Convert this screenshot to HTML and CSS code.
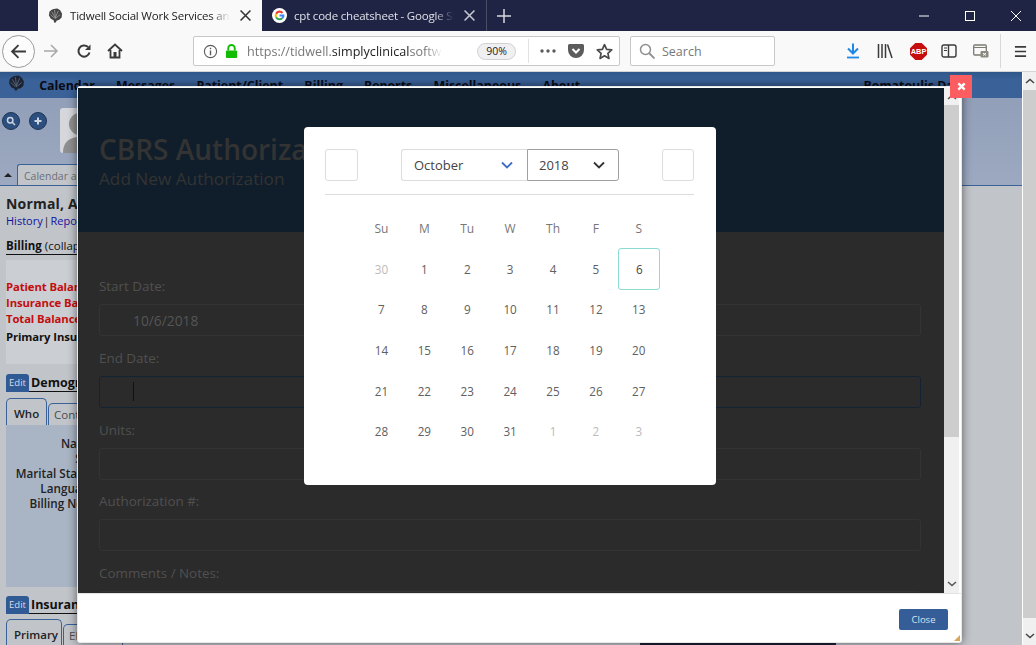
FILE: index.html
```html
<!DOCTYPE html>
<html lang="en">
<head>
<meta charset="utf-8">
<title>Tidwell Social Work Services</title>
<link rel="stylesheet" href="styles.css">
</head>
<body>
<div class="tabbar">
  <div class="tab active">
    <svg class="fav" viewBox="0 0 16 16"><path d="M6 1 10 0.500 13 2.500 15 6 14.500 10 12 12.500 9 13.500 8.500 15.500 6.500 15.500 6 13 3 11.500 1 8 1.500 4 3.500 2Z" fill="#444"/><path d="M4 4 8 11M7 2 8 11M11 3 8 10M13 7 8 11M2.500 7 7 11" stroke="#a5a5a5" stroke-width=".8" fill="none"/></svg>
    <span class="tab-title">Tidwell Social Work Services and</span>
    <svg class="tab-x" viewBox="0 0 10 10"><path d="M0.5 0.5 9.5 9.5M9.5 0.5 0.5 9.5" stroke="#333" stroke-width="1.4"/></svg>
  </div>
  <div class="tab">
    <svg class="fav" viewBox="0 0 16 16"><circle cx="8" cy="8" r="8" fill="#fff"/><path d="M3.5 5.5A5.2 5.2 0 0 1 12 4.5L10.5 6A3.1 3.1 0 0 0 5.400 6.800Z" fill="#ea4335"/><path d="M3.500 5.500A5.200 5.200 0 0 0 3.500 10.500L5.300 9.200A3.100 3.100 0 0 1 5.400 6.800Z" fill="#fbbc05"/><path d="M3.500 10.500A5.200 5.200 0 0 0 11.800 11.500L10.200 10.200A3.100 3.100 0 0 1 5.300 9.200Z" fill="#34a853"/><path d="M13.200 7H8V9H11A2.700 2.700 0 0 1 10.200 10.200L11.800 11.500A5.200 5.200 0 0 0 13.200 7Z" fill="#4285f4"/></svg>
    <span class="tab-title">cpt code cheatsheet - Google Sh</span>
    <svg class="tab-x" viewBox="0 0 10 10"><path d="M0.5 0.5 9.5 9.5M9.5 0.5 0.5 9.5" stroke="#c8c9d2" stroke-width="1.4"/></svg>
  </div>
  <div class="tab-plus"><svg viewBox="0 0 14 14"><path d="M7 0V14M0 7H14" stroke="#d8d9e0" stroke-width="1.500"/></svg></div>
  <div class="win-controls">
    <svg viewBox="0 0 12 12"><path d="M1 6H11" stroke="#fff"/></svg>
    <svg viewBox="0 0 12 12"><rect x="1.500" y="1.500" width="9" height="9" fill="none" stroke="#fff"/></svg>
    <svg viewBox="0 0 12 12"><path d="M1 1 11 11M11 1 1 11" stroke="#fff"/></svg>
  </div>
</div>

<div class="toolbar">
  <div class="back"><svg viewBox="0 0 16 16"><path d="M15 8H2M8 2 2 8 8 14" fill="none" stroke="#3b3b3b" stroke-width="1.800"/></svg></div>
  <svg class="tool forward" viewBox="0 0 16 16"><path d="M1 8H14M8 2 14 8 8 14" fill="none" stroke="#a8a8a8" stroke-width="1.500"/></svg>
  <svg class="tool reload" viewBox="0 0 16 16"><path d="M13.500 9.500A5.600 5.600 0 1 1 12 4" fill="none" stroke="#3b3b3b" stroke-width="2"/><path d="M14.500 1.500V7H9Z" fill="#3b3b3b"/></svg>
  <svg class="tool home" viewBox="0 0 16 16"><path d="M1 8 8 1.500 15 8M3.500 7V14.500H12.500V7" fill="none" stroke="#3b3b3b" stroke-width="1.800"/><rect x="6.500" y="9" width="3" height="5.500" fill="#3b3b3b"/></svg>

  <div class="urlbar">
    <svg class="u-info" viewBox="0 0 16 16"><circle cx="8" cy="8" r="6.500" fill="none" stroke="#5c5c5c" stroke-width="1.200"/><path d="M8 7V12M8 4V5.500" stroke="#5c5c5c" stroke-width="1.500"/></svg>
    <svg class="u-lock" viewBox="0 0 14 16"><path d="M3.500 7V4.500A3.500 3.500 0 0 1 10.500 4.500V7" fill="none" stroke="#12bc00" stroke-width="2"/><rect x="1" y="7" width="12" height="8" rx="1" fill="#12bc00"/></svg>
    <span class="u-text">https://tidwell.<b>simplyclinical</b>softw</span>
    <span class="zoom-pill">90%</span>
    <span class="u-sep"></span>
    <svg class="u-dots" viewBox="0 0 16 4"><circle cx="2" cy="2" r="1.700"/><circle cx="8" cy="2" r="1.700"/><circle cx="14" cy="2" r="1.700"/></svg>
    <svg class="u-pocket" viewBox="0 0 16 16"><path d="M0 2.500A1.500 1.500 0 0 1 1.500 1H14.500A1.500 1.500 0 0 1 16 2.500V7A8 8 0 0 1 0 7Z" fill="#5c5c5c"/><path d="M4.500 6 8 9.500 11.500 6" fill="none" stroke="#fff" stroke-width="2"/></svg>
    <svg class="u-star" viewBox="0 0 16 16"><path d="M8 1.500 10 6 14.800 6.500 11.200 9.700 12.200 14.500 8 12 3.800 14.500 4.800 9.700 1.200 6.500 6 6Z" fill="none" stroke="#4a4a4a" stroke-width="1.600" stroke-linejoin="round"/></svg>
  </div>

  <div class="searchbar">
    <svg viewBox="0 0 16 16"><circle cx="6.500" cy="6.500" r="5" fill="none" stroke="#8f8f8f" stroke-width="1.500"/><path d="M10 10 15.500 15.500" stroke="#8f8f8f" stroke-width="1.800"/></svg>
    <span>Search</span>
  </div>

  <div class="tool-right">
    <svg class="download" viewBox="0 0 14 16"><path d="M7 0.500V10M2 5.500 7 10.500 12 5.500" fill="none" stroke="#1e88e5" stroke-width="2"/><path d="M1 14.500H13" stroke="#1e88e5" stroke-width="1.800"/></svg>
    <svg class="library" viewBox="0 0 16 16"><path d="M1.500 1V15M5 1V15M8.500 1V15M10.500 1.500 15 15" fill="none" stroke="#3b3b3b" stroke-width="1.500"/></svg>
    <svg class="abp" viewBox="0 0 16 16"><path d="M5 0H11L16 5V11L11 16H5L0 11V5Z" fill="#c70d0d"/><text x="8" y="10.700" text-anchor="middle" class="abp-text">ABP</text></svg>
    <svg class="sidebar-ic" viewBox="0 0 16 16"><rect x="1" y="2" width="14" height="12" rx="2" fill="none" stroke="#3b3b3b" stroke-width="1.400"/><path d="M7.500 2V14" stroke="#3b3b3b" stroke-width="1.400"/><path d="M3 5H6M3 7.500H6" stroke="#3b3b3b"/></svg>
    <svg class="pip" viewBox="0 0 16 16"><rect x="0.700" y="2" width="12.600" height="10" rx="1" fill="none" stroke="#7b7b72" stroke-width="1.300"/><path d="M1 4.500H13" stroke="#7b7b72"/><rect x="7.500" y="8" width="8" height="6.500" rx="1" fill="#8a8a80"/><path d="M10 10 13 12.500M13 10 10 12.500" stroke="#fff"/></svg>
    <span class="t-sep"></span>
    <svg class="menu" viewBox="0 0 14 14"><path d="M1 2H13M1 7H13M1 12H13" stroke="#3b3b3b" stroke-width="1.800"/></svg>
  </div>
</div>

<div class="page">
  <div class="app">
    <nav class="appnav">
      <svg class="applogo" viewBox="0 0 16 16"><path d="M6 1 10 0.500 13 2.500 15 6 14.500 10 12 12.500 9 13 8.500 14.500 6.500 14.500 6 13 3 11.500 1 8 1.500 4 3.500 2Z" fill="#1c2433"/><path d="M4 4 8 11M7 2 8 11M11 3 8 10M13 7 8 11M2.500 7 7 11" stroke="#58677f" stroke-width=".8" fill="none"/></svg>
      <a>Calendar</a><a>Messages</a><a>Patient/Client</a><a>Billing</a><a>Reports</a><a>Miscellaneous</a><a>About</a>
      <a class="nav-user">Bomatoulis Dan</a>
    </nav>
    <aside class="side">
      <div class="side-top">
        <div class="side-tools">
          <span class="round"><svg viewBox="0 0 10 10"><circle cx="4.200" cy="4.200" r="2.700" fill="none" stroke="#cdd5e2" stroke-width="1.500"/><path d="M6 6 9 9" stroke="#cdd5e2" stroke-width="1.500"/></svg></span>
          <span class="round"><svg viewBox="0 0 10 10"><path d="M5 1.500V8.500M1.500 5H8.500" stroke="#cdd5e2" stroke-width="2"/></svg></span>
          <div class="avatar"><svg viewBox="0 0 40 45"><circle cx="20" cy="16" r="11" fill="#8f8f8f"/><path d="M3 45C3 32 12 29 20 29S37 32 37 45Z" fill="#8f8f8f"/></svg></div>
        </div>
        <div class="side-tabs">
          <span class="up-tri"></span>
          <span class="side-tab">Calendar and</span>
        </div>
      </div>
      <div class="side-body">
        <div class="patient">Normal, Adam</div>
        <div class="plinks"><a>History</a> | <a>Reports</a></div>
        <div class="sec-title"><b>Billing</b> (collapse)</div>
        <div class="bill-box">
          <div class="red">Patient Balance:</div>
          <div class="red">Insurance Balance:</div>
          <div class="red">Total Balance:</div>
          <div class="ins">Primary Insurance:</div>
        </div>
        <div class="sec-head"><span class="edit">Edit</span><b>Demographics</b></div>
        <div class="mini-tabs"><span class="mini on">Who</span><span class="mini">Contact</span></div>
        <div class="who-panel">
          <div>Name:</div><div>Sex:</div><div>Marital Status:</div><div>Language:</div><div>Billing Note:</div>
        </div>
        <div class="sec-head ins-head"><span class="edit">Edit</span><b>Insurance</b></div>
        <div class="mini-tabs ins-tabs"><span class="mini on wide">Primary</span><span class="mini">Eligibility</span></div>
      </div>
    </aside>
  </div>
  <div class="page-scroll">
    <svg viewBox="0 0 10 6"><path d="M1 5 5 1.500 9 5" fill="none" stroke="#444" stroke-width="1.500"/></svg>
    <span class="page-thumb"></span>
    <svg viewBox="0 0 10 6"><path d="M1 1 5 4.500 9 1" fill="none" stroke="#444" stroke-width="1.500"/></svg>
  </div>

  <span class="page-strip"></span>

  <div class="modal">
    <div class="modal-main">
      <div class="modal-content">
        <header class="m-head">
          <h1>CBRS Authorization</h1>
          <p>Add New Authorization</p>
        </header>
        <div class="m-body">
          <div class="field"><label>Start Date:</label><div class="input">10/6/2018</div></div>
          <div class="field"><label>End Date:</label><div class="input focus"><span class="caret"></span></div></div>
          <div class="field"><label>Units:</label><div class="input"></div></div>
          <div class="field"><label>Authorization #:</label><div class="input"></div></div>
          <div class="field"><label>Comments / Notes:</label><div class="input"></div></div>
        </div>
      </div>
      <div class="m-scroll">
        <svg viewBox="0 0 10 6"><path d="M1 5 5 1.500 9 5" fill="none" stroke="#555" stroke-width="1.500"/></svg>
        <span class="m-thumb"></span>
        <svg viewBox="0 0 10 6"><path d="M1 1 5 4.500 9 1" fill="none" stroke="#555" stroke-width="1.500"/></svg>
      </div>
    </div>
    <footer class="m-foot"><button class="close-btn">Close</button></footer>
    <span class="grip"></span>
  </div>
  <button class="modal-x"><svg viewBox="0 0 10 10"><path d="M1.500 1.500 8.500 8.500M8.500 1.500 1.500 8.500" stroke="#fff" stroke-width="2.600"/></svg></button>

  <div class="cal">
    <div class="cal-head">
      <span class="cal-nav"></span>
      <div class="cal-selects">
        <div class="sel month">October<svg viewBox="0 0 12 8"><path d="M1 1.500 6 6.500 11 1.500" fill="none" stroke="#3a6fc4" stroke-width="1.800"/></svg></div>
        <div class="sel year">2018<svg viewBox="0 0 12 8"><path d="M1 1.500 6 6.500 11 1.500" fill="none" stroke="#333" stroke-width="1.800"/></svg></div>
      </div>
      <span class="cal-nav"></span>
    </div>
    <div class="cal-grid">
      <span class="dow">Su</span><span class="dow">M</span><span class="dow">Tu</span><span class="dow">W</span><span class="dow">Th</span><span class="dow">F</span><span class="dow">S</span>
      <span class="out">30</span><span>1</span><span>2</span><span>3</span><span>4</span><span>5</span><span class="today">6</span>
      <span>7</span><span>8</span><span>9</span><span>10</span><span>11</span><span>12</span><span>13</span>
      <span>14</span><span>15</span><span>16</span><span>17</span><span>18</span><span>19</span><span>20</span>
      <span>21</span><span>22</span><span>23</span><span>24</span><span>25</span><span>26</span><span>27</span>
      <span>28</span><span>29</span><span>30</span><span>31</span><span class="out">1</span><span class="out">2</span><span class="out">3</span>
    </div>
  </div>
</div>
</body>
</html>
```
FILE: styles.css
```css
* { box-sizing: border-box; }
html, body { margin: 0; height: 100%; overflow: hidden; }
body { width: 1036px; height: 645px; font-family: "Open Sans", "Noto Sans", sans-serif; background: #c1c5ca; }

.tabbar { height: 31px; background: #1f2344; display: flex; align-items: stretch; padding-left: 38px; }
.tab { width: 224px; display: flex; align-items: center; padding: 0 11px 0 10px; color: #dfe0e8; font-size: 11.500px; letter-spacing: -.2px; position: relative; }
.tab.active { background: #f9f9fa; color: #222; }
.fav { width: 15px; height: 15px; flex: none; margin-right: 7px; }
.tab-title { flex: 1; overflow: hidden; white-space: nowrap; -webkit-mask-image: linear-gradient(to right, #000 88%, transparent 100%); mask-image: linear-gradient(to right, #000 88%, transparent 100%); }
.tab-x { width: 11px; height: 11px; flex: none; margin-left: 10px; }
.tab-plus { width: 35px; border-left: 1px solid #4a4d68; margin: 0; display: flex; align-items: center; justify-content: center; height: 31px; }
.tab-plus svg { width: 14px; height: 14px; }
.win-controls { margin-left: auto; display: flex; align-items: center; gap: 34px; padding-right: 14px; }
.win-controls svg { width: 12px; height: 12px; }

.toolbar { height: 41px; background: #f9f9fa; display: flex; align-items: center; border-bottom: 1px solid #d4d4d6; padding-left: 2px; }
.back { width: 33px; height: 33px; border: 1px solid #9a9a9a; border-radius: 50%; background: #fcfcfc; display: flex; align-items: center; justify-content: center; flex: none; }
.back svg { width: 17px; height: 17px; }
.tool { width: 16px; height: 16px; flex: none; }
.forward { margin-left: 8px; }
.reload { margin-left: 17px; }
.home { margin-left: 15px; }

.urlbar { width: 427px; height: 30px; margin-left: 70px; background: #fff; border: 1px solid #c8c8ca; border-radius: 2px; display: flex; align-items: center; padding-left: 9px; flex: none; }
.u-info { width: 15px; height: 15px; flex: none; }
.u-lock { width: 13px; height: 15px; margin-left: 7px; flex: none; }
.u-text { margin-left: 9px; padding-top: 1px; width: 212px; font-size: 12.600px; color: #777; overflow: hidden; white-space: nowrap; flex: none; -webkit-mask-image: linear-gradient(to right, #000 84%, transparent 92%); mask-image: linear-gradient(to right, #000 84%, transparent 92%); }
.u-text b { font-weight: 400; color: #222; }
.zoom-pill { margin-left: 18px; width: 39px; height: 17px; border: 1px solid #d0d0d0; border-radius: 9px; background: #f0f0f2; font-size: 10.500px; color: #222; display: flex; align-items: center; justify-content: center; flex: none; }
.u-sep { width: 1px; height: 24px; background: #e2e2e4; margin-left: 12px; flex: none; }
.u-dots { width: 16px; height: 4px; margin-left: 11px; fill: #5c5c5c; flex: none; }
.u-pocket { width: 16px; height: 16px; margin-left: 12px; flex: none; }
.u-star { width: 17px; height: 17px; margin-left: 12px; flex: none; }

.searchbar { width: 145px; height: 30px; margin-left: 10px; background: #fff; border: 1px solid #c8c8ca; border-radius: 2px; display: flex; align-items: center; padding-left: 8px; color: #777; font-size: 12.500px; flex: none; }
.searchbar svg { width: 16px; height: 16px; margin-right: 7px; }
.searchbar span { padding-top: 1px; }

.tool-right { display: flex; align-items: center; flex: 1; height: 100%; position: relative; }
.download { width: 14px; height: 16px; margin-left: 71px; }
.library { width: 16px; height: 16px; margin-left: 17px; }
.abp { width: 17px; height: 17px; margin-left: 17px; }
.abp-text { font: 700 7px "Liberation Sans", sans-serif; fill: #fff; }
.sidebar-ic { width: 16px; height: 16px; margin-left: 14px; }
.pip { width: 16px; height: 16px; margin-left: 16px; }
.t-sep { width: 1px; height: 34px; background: #d8d8da; margin-left: 11px; }
.menu { width: 13px; height: 13px; margin-left: 13px; }

.page { height: 573px; display: flex; position: relative; overflow: hidden; }
.app { flex: 1; display: flex; flex-direction: column; min-width: 0; }
.appnav { height: 26px; flex: none; display: flex; align-items: center; background: linear-gradient(#2f5788, #3a6299 30%); padding-left: 8px; gap: 21.200px; font: 700 12.400px "Open Sans", sans-serif; color: #0a0a14; white-space: nowrap; }
.applogo { width: 17px; height: 17px; margin-right: -7px; margin-top: -3px; }
.nav-user { margin-left: auto; margin-right: 60px; }

.side { flex: 1; display: flex; flex-direction: column; width: 100%; }
.side-top { height: 88px; flex: none; background: linear-gradient(#929fb8, #9ca9c1); border-bottom: 1px solid #3a6299; display: flex; flex-direction: column; justify-content: space-between; }
.side-tools { display: flex; align-items: flex-start; padding: 10px 0 0 2px; gap: 9px; height: 60px; }
.round { width: 18px; height: 18px; border-radius: 50%; background: #2c4f80; border: 1px solid #1d3556; display: flex; align-items: center; justify-content: center; margin-top: 4px; }
.round svg { width: 10px; height: 10px; }
.avatar { width: 46px; height: 45px; background: #d5d7db; border-radius: 3px; margin-left: 4px; overflow: hidden; }
.avatar svg { width: 40px; height: 45px; display: block; }
.side-tabs { display: flex; align-items: flex-end; height: 21px; }
.up-tri { width: 0; height: 0; border: 4px solid transparent; border-top: 0; border-bottom: 4px solid #222; margin: 0 5px 8px 4px; }
.side-tab { height: 21px; width: 110px; background: #c1c5ca; border-top: 1px solid #3a6299; border-left: 1px solid #3a6299; border-radius: 3px 0 0 0; font-size: 10.500px; color: #6b6f75; padding: 4px 0 0 6px; white-space: nowrap; }

.side-body { padding: 9px 0 0 6px; width: 200px; flex: 1; white-space: nowrap; font-size: 11.500px; color: #111; }
.patient { font-weight: 700; font-size: 14px; line-height: 18px; letter-spacing: .2px; color: #222; }
.plinks { line-height: 16px; color: #222; font-size: 11px; word-spacing: -2px; }
.plinks a { color: #12129c; }
.sec-title { margin-top: 8px; line-height: 17px; border-bottom: 1px solid #111; height: 18px; font-size: 11.500px; }
.bill-box { margin-top: 5px; height: 104px; background: #cbced3; padding-top: 19px; font-weight: 700; font-size: 11.300px; letter-spacing: -.1px; line-height: 16px; }
.red { color: #c40d0d; }
.ins { margin-top: 2px; color: #111; }
.sec-head { margin-top: 10px; height: 18px; border-bottom: 1px solid #111; display: flex; align-items: center; gap: 2px; font-size: 12.500px; }
.ins-head { margin-top: 9px; }
.edit { width: 23px; height: 18px; background: #2f5a94; color: #d5dde9; border-radius: 3px 3px 0 0; font-size: 9.500px; display: flex; align-items: center; justify-content: center; }
.mini-tabs { display: flex; align-items: flex-end; height: 27px; margin-top: 6px; gap: 1px; }
.ins-tabs { margin-top: 5px; }
.mini { width: 60px; height: 22px; border: 1px solid #3a6299; border-bottom: 0; border-radius: 5px 5px 0 0; font-size: 11.500px; padding: 3px 0 0 5px; color: #4a4d52; }
.mini.on { width: 41px; height: 27px; padding: 7px 0 0 7px; font-weight: 600; color: #222; background: #c1c5ca; }
.mini.on.wide { width: 56px; }
.who-panel { width: 92px; height: 162px; background: #a9b4c4; padding-top: 11px; text-align: right; font-weight: 600; font-size: 11.700px; line-height: 15px; color: #222; }

.page-scroll { width: 14px; flex: none; border-left: 1px solid #fff; background: #f0f0f0; display: flex; flex-direction: column; align-items: center; }
.page-scroll svg { width: 10px; height: 6px; flex: none; margin: 6px 0; }
.page-thumb { width: 100%; flex: 1; background: #cdcdcd; margin-bottom: 9px; }
.page-strip { position: absolute; left: 640px; bottom: 0; width: 196px; height: 2px; background: #1a2236; }

.modal { position: absolute; left: 77px; top: 14px; width: 885px; height: 557px; background: #fff; border: 1px solid #e8e8e8; border-radius: 3px; box-shadow: 0 0 10px rgba(0,0,0,.55); display: flex; flex-direction: column; }
.modal-main { height: 507px; display: flex; flex: none; padding-top: 1px; border-bottom: 1px solid #e3e3e3; }
.modal-content { flex: 1; background: #2b2b2b; overflow: hidden; min-width: 0; }
.m-head { height: 144px; background: #101e2b; padding: 43px 0 0 21px; color: #333; }
.m-head h1 { margin: 0; font-size: 28px; line-height: 36px; font-weight: 600; white-space: nowrap; }
.m-head p { margin: 0; font-size: 17.200px; line-height: 23px; }
.m-body { padding: 44px 23px 0 21px; display: flex; flex-direction: column; gap: 11.750px; }
.field { display: flex; flex-direction: column; gap: 8px; }
.field label { font-size: 13.400px; line-height: 20px; color: #505050; height: 20px; }
.input { height: 32px; border: 1px solid #333; border-radius: 3px; color: #555; font-size: 13.800px; padding-left: 33px; display: flex; align-items: center; }
.input.focus { border-color: #142334; }
.caret { width: 1px; height: 19px; background: #111; }
.m-scroll { width: 15px; margin-right: 2px; flex: none; background: #f0f0f0; display: flex; flex-direction: column; align-items: center; }
.m-scroll svg { width: 10px; height: 6px; flex: none; margin: 6px 0; }
.m-thumb { width: 100%; height: 332px; background: #cdcdcd; margin-bottom: auto; margin-top: -1px; }
.m-foot { flex: 1; display: flex; justify-content: flex-end; align-items: flex-start; padding: 15px 13px 0 0; }
.close-btn { width: 49px; height: 21px; border: 0; border-radius: 2px; background: #355e99; color: #d8e2f0; font: 9.500px "Open Sans", sans-serif; padding: 0; }
.grip { position: absolute; right: 1px; bottom: 1px; width: 0; height: 0; border-left: 6px solid transparent; border-bottom: 6px solid #d8a65a; }
.modal-x { position: absolute; left: 950px; top: 3px; width: 22px; height: 23px; background: #fb5d60; border: 0; padding: 0; display: flex; align-items: center; justify-content: center; }
.modal-x svg { width: 9px; height: 9px; }

.cal { position: absolute; left: 304px; top: 55px; width: 412px; height: 358px; background: #fff; border-radius: 4px; padding: 22px 22px 0 21px; font-family: "Open Sans", sans-serif; }
.cal-head { height: 46px; display: flex; justify-content: space-between; align-items: flex-start; border-bottom: 1px solid #dcdcdc; }
.cal-nav { width: 33px; height: 32px; border: 1px solid #dcdcdc; border-radius: 3px; }
.cal-nav:last-child { width: 32px; }
.cal-selects { display: flex; margin-left: 10px; margin-right: 10px; }
.sel { height: 32px; display: flex; align-items: center; justify-content: space-between; font-size: 13px; color: #444; border: 1px solid #dcdcdc; }
.sel svg { width: 12px; height: 8px; }
.month { width: 126px; padding: 0 14px 0 12px; border-right: 0; border-radius: 3px 0 0 3px; }
.year { width: 92px; padding: 0 13px 0 11px; border-color: #a0a0a0; border-radius: 0 3px 3px 0; }
.cal-grid { width: 301px; margin: 13px 0 0 35px; display: grid; grid-template-columns: repeat(7, 42.900px); grid-auto-rows: 40.600px; font-size: 11.700px; color: #606060; text-align: center; }
.cal-grid span { display: flex; align-items: center; justify-content: center; }
.cal-grid .dow { color: #777; font-size: 12px; height: 40px; }
.cal-grid .out { color: #bbb; }
.cal-grid .today { width: 42px; height: 42px; margin-top: -1px; border: 1px solid #8adcd4; border-radius: 3px; color: #444; justify-self: end; }
```
